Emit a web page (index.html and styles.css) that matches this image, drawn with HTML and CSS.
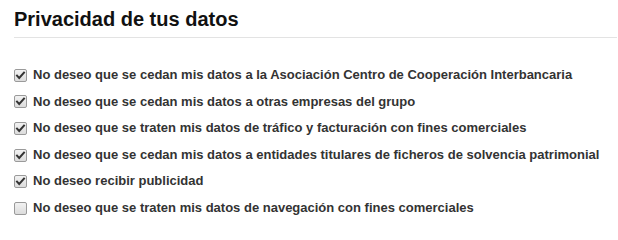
FILE: index.html
```html
<!DOCTYPE html>
<html lang="es">
<head>
<meta charset="utf-8">
<title>Privacidad de tus datos</title>
<link rel="stylesheet" href="styles.css">
</head>
<body>
<section class="privacy">
  <h2 class="privacy-title">Privacidad de tus datos</h2>
  <ul class="options">
    <li class="option"><span class="box checked"><svg viewBox="0 0 13 13" width="13" height="13"><path d="M3 6.6 L5.2 9 L10 3.6" fill="none" stroke="#333" stroke-width="2" stroke-linecap="square"/></svg></span><span class="label">No deseo que se cedan mis datos a la Asociación Centro de Cooperación Interbancaria</span></li>
    <li class="option"><span class="box checked"><svg viewBox="0 0 13 13" width="13" height="13"><path d="M3 6.6 L5.2 9 L10 3.6" fill="none" stroke="#333" stroke-width="2" stroke-linecap="square"/></svg></span><span class="label">No deseo que se cedan mis datos a otras empresas del grupo</span></li>
    <li class="option"><span class="box checked"><svg viewBox="0 0 13 13" width="13" height="13"><path d="M3 6.6 L5.2 9 L10 3.6" fill="none" stroke="#333" stroke-width="2" stroke-linecap="square"/></svg></span><span class="label">No deseo que se traten mis datos de tráfico y facturación con fines comerciales</span></li>
    <li class="option"><span class="box checked"><svg viewBox="0 0 13 13" width="13" height="13"><path d="M3 6.6 L5.2 9 L10 3.6" fill="none" stroke="#333" stroke-width="2" stroke-linecap="square"/></svg></span><span class="label">No deseo que se cedan mis datos a entidades titulares de ficheros de solvencia patrimonial</span></li>
    <li class="option"><span class="box checked"><svg viewBox="0 0 13 13" width="13" height="13"><path d="M3 6.6 L5.2 9 L10 3.6" fill="none" stroke="#333" stroke-width="2" stroke-linecap="square"/></svg></span><span class="label">No deseo recibir publicidad</span></li>
    <li class="option"><span class="box"></span><span class="label">No deseo que se traten mis datos de navegación con fines comerciales</span></li>
  </ul>
</section>
</body>
</html>
```
FILE: styles.css
```css
html, body {
  margin: 0;
  padding: 0;
  background: #ffffff;
}
body {
  font-family: "Liberation Sans", Arial, sans-serif;
  color: #333333;
}
.privacy {
  padding: 8px 1px 0 14px;
}
.privacy-title {
  margin: 0;
  font-size: 20px;
  line-height: 23px;
  font-weight: bold;
  color: #111111;
  padding-bottom: 6px;
  border-bottom: 1px solid #e3e3e3;
}
.options {
  list-style: none;
  margin: 28px 0 0 0;
  padding: 0;
  display: flex;
  flex-direction: column;
  gap: 8px;
}
.option {
  display: flex;
  align-items: center;
  gap: 6px;
  height: 18.6px;
  font-size: 13px;
  line-height: 18.6px;
  font-weight: bold;
  color: #333333;
}
.box {
  box-sizing: border-box;
  width: 13px;
  height: 13px;
  flex: none;
  border: 1px solid #9a9a9a;
  border-radius: 2px;
  background: linear-gradient(#f2f2f2, #dcdcdc);
  position: relative;
}
.box svg {
  position: absolute;
  left: -1px;
  top: -1px;
}
.label {
  white-space: nowrap;
}
```
